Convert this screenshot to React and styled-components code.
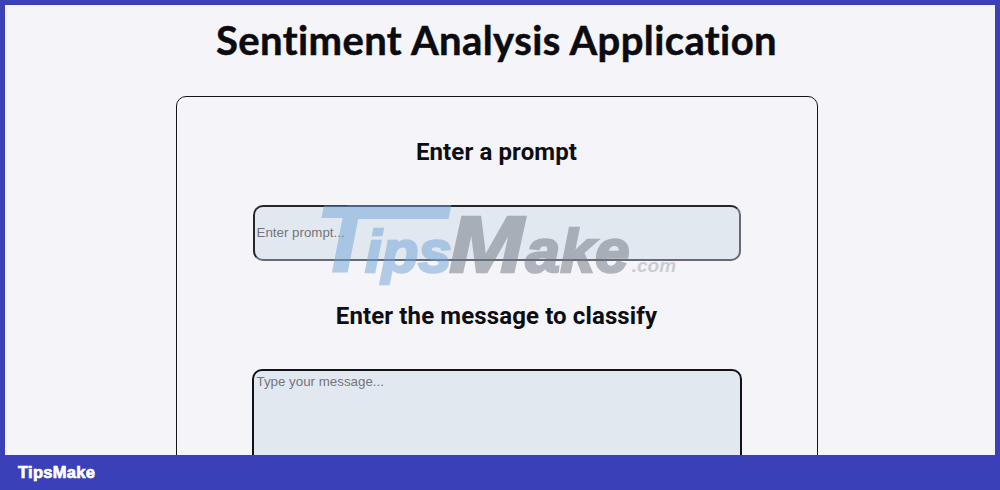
import React from "react";
import styled, { createGlobalStyle } from "styled-components";

const Global = createGlobalStyle`
  html, body { margin: 0; padding: 0; height: 490px; overflow: hidden; background: #f4f4f9; }
  #root { height: 490px; }
`;

const Frame = styled.div`
  position: relative;
  box-sizing: border-box;
  width: 1000px;
  height: 490px;
  display: flex;
  flex-direction: column;
  background: #f4f4f9;
  overflow: hidden;
`;

const Viewport = styled.main`
  flex: 1;
  min-height: 0;
  overflow: hidden;
  box-sizing: border-box;
  border: solid #3a41b8;
  border-width: 5px 5px 0;
  display: flex;
  flex-direction: column;
  align-items: center;
  padding-right: 7px;
`;

const Title = styled.h1`
  margin: 12px 0 0;
  font: 700 40px/46px "Lato", "Noto Sans", sans-serif;
  font-variant-ligatures: none;
  letter-spacing: 0.4px;
  -webkit-text-stroke: 0.5px #0b0b10;
  color: #0b0b10;
  white-space: nowrap;
`;

const Card = styled.section`
  margin-top: 33px;
  width: 642px;
  box-sizing: border-box;
  flex-shrink: 0;
  height: 420px;
  border: 1px solid #15151c;
  border-radius: 10px;
  display: flex;
  flex-direction: column;
  align-items: center;
  padding-top: 38px;
`;

const Label = styled.h2`
  margin: 0;
  font: 700 24px/34px "Roboto", "Liberation Sans", sans-serif;
  color: #0d0d12;
  letter-spacing: 0.12px;
`;

const PromptInput = styled.input`
  box-sizing: border-box;
  width: 488px;
  height: 56px;
  margin-top: 36px;
  padding: 0 2px 2px;
  border: 2px solid;
  border-color: #25252e #666a74 #666a74 #25252e;
  border-radius: 10px;
  background: #e2e8f0;
  font: 13.33px "Liberation Sans", Arial, sans-serif;
  outline: none;
  &::placeholder { color: #74757c; }
`;

const SecondLabel = styled(Label)`
  margin-top: 38px;
`;

const MessageArea = styled.textarea`
  box-sizing: border-box;
  width: 490px;
  height: 140px;
  margin-top: 36px;
  padding: 3px 3px;
  border: 2px solid #12121a;
  border-radius: 10px;
  background: #e2e8f0;
  font: 13.33px "Liberation Sans", Arial, sans-serif;
  outline: none;
  resize: none;
  &::placeholder { color: #74757c; }
`;

const BrandBar = styled.footer`
  flex: 0 0 35px;
  height: 35px;
  display: flex;
  align-items: center;
  padding-left: 18px;
  background: #3a41b8;
  color: #fff;
  font: 700 16.5px "Liberation Sans", Arial, sans-serif;
  -webkit-text-stroke: 0.7px #fff;
  letter-spacing: 0.3px;
`;

const Watermark = styled.div`
  position: absolute;
  left: 316px;
  top: 187px;
  display: flex;
  align-items: baseline;
  opacity: 0.5;
  font-family: "Liberation Sans", Arial, sans-serif;
  font-weight: 700;
  font-style: italic;
  pointer-events: none;
  white-space: nowrap;
`;

const MarkT = styled.span`
  position: relative;
  margin-right: -9px;
  font-size: 95px;
  line-height: 105px;
  color: #6fa3d8;
  -webkit-text-stroke: 2px currentColor;
  &::after {
    content: "";
    position: absolute;
    left: 30px;
    top: 18px;
    width: 104px;
    height: 14px;
    background: currentColor;
    transform: skewX(-12deg);
  }
`;

const MarkBlue = styled.span`
  margin-right: -3px;
  font-size: 60px;
  color: #6fa3d8;
  -webkit-text-stroke: 2.5px currentColor;
`;

const MarkM = styled.span`
  display: inline-block;
  margin-right: 10px;
  font-size: 80px;
  color: #6f7680;
  transform: scaleX(1.12);
  transform-origin: left bottom;
  -webkit-text-stroke: 2.5px currentColor;
`;

const MarkGray = styled.span`
  font-size: 62px;
  color: #6f7680;
  letter-spacing: 0.3px;
  -webkit-text-stroke: 2.5px currentColor;
`;

const MarkCom = styled.span`
  font-size: 19px;
  color: #a2a6ab;
  margin-left: 2px;
`;

export default function App() {
  return (
    <>
      <Global />
      <Frame>
        <Viewport>
          <Title>Sentiment Analysis Application</Title>
          <Card>
            <Label>Enter a prompt</Label>
            <PromptInput placeholder="Enter prompt..." />
            <SecondLabel>Enter the message to classify</SecondLabel>
            <MessageArea placeholder="Type your message..." />
          </Card>
        </Viewport>
        <BrandBar>TipsMake</BrandBar>
        <Watermark aria-hidden="true">
          <MarkT>T</MarkT>
          <MarkBlue>ips</MarkBlue>
          <MarkM>M</MarkM>
          <MarkGray>ake</MarkGray>
          <MarkCom>.com</MarkCom>
        </Watermark>
      </Frame>
    </>
  );
}
